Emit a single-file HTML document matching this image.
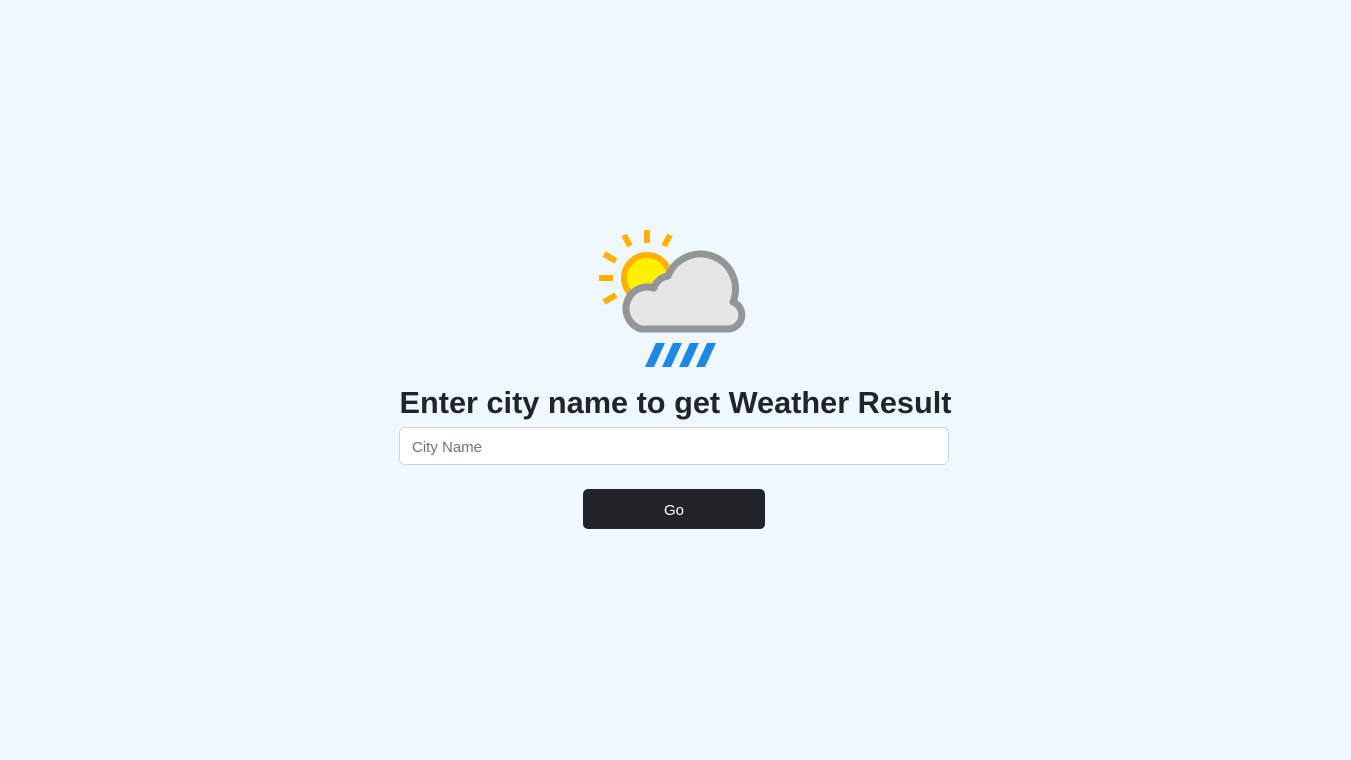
<!DOCTYPE html>
<html><head><meta charset="utf-8"><style>
html,body{margin:0;padding:0;width:1351px;height:760px;background:#eff7ff;font-family:"Liberation Sans",sans-serif;overflow:hidden}
svg{position:absolute;left:0;top:0}
h1{position:absolute;left:0;width:1351px;top:383px;margin:0;text-align:center;font-size:30.7px;font-weight:600;color:#212529;line-height:40px;letter-spacing:0px}
.inp{position:absolute;left:399px;top:427px;width:548px;height:36px;background:#fff;border:1px solid #ced4da;border-radius:6px;box-sizing:content-box}
.inp span{position:absolute;left:12px;top:11px;font-size:15px;color:#6c757d}
.btn{position:absolute;left:583px;top:489px;width:182px;height:40px;background:#212529;border-radius:5px;color:#fff;font-size:15px;text-align:center;line-height:43px}
</style></head><body>
<svg width="1351" height="760">
 <g stroke="#ffb000" stroke-width="6">
  <line x1="647" y1="230" x2="647" y2="243"/>
  <line x1="624" y1="235" x2="630" y2="246"/>
  <line x1="670" y1="235" x2="664" y2="246"/>
  <line x1="604" y1="254" x2="616" y2="261"/>
  <line x1="599" y1="278" x2="613" y2="278"/>
  <line x1="604" y1="302" x2="616" y2="295"/>
 </g>
 <circle cx="647" cy="278" r="23" fill="#fff200" stroke="#ffb000" stroke-width="6"/>
 <path d="M641 329 L728 329 A14 14 0 0 0 733 302 A30 30 0 0 0 668 276 A17 17 0 0 0 654 288 A20 20 0 0 0 641 329 Z" fill="#e6e6e6" stroke="#949598" stroke-width="7" stroke-linejoin="round"/>
 <g fill="#1e88e5">
  <polygon points="656,343 665,343 654,367 645,367"/>
  <polygon points="673,343 682,343 671,367 662,367"/>
  <polygon points="690,343 699,343 688,367 679,367"/>
  <polygon points="707,343 716,343 705,367 696,367"/>
 </g>
</svg>
<h1>Enter city name to get Weather Result</h1>
<div class="inp"><span>City Name</span></div>
<div class="btn">Go</div>
</body></html>
